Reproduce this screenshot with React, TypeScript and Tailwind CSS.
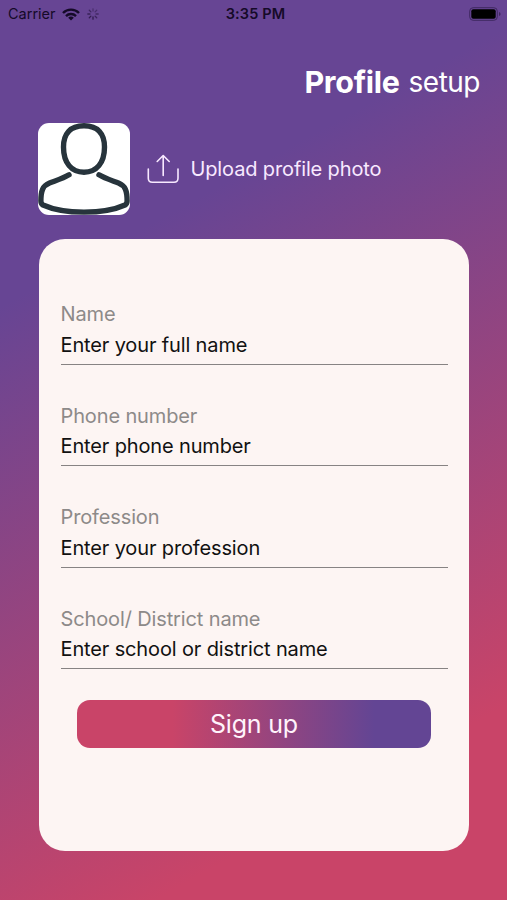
import React from "react";

const fields = [
  { label: "Name", value: "Enter your full name" },
  { label: "Phone number", value: "Enter phone number" },
  { label: "Profession", value: "Enter your profession" },
  { label: "School/ District name", value: "Enter school or district name" },
];

function WifiIcon() {
  return (
    <svg className="ml-[6px] h-[13px] w-[18px]" viewBox="0 0 18 13" fill="none" stroke="#150a28" strokeWidth="2.4">
      <path d="M1 5A11.2 11.2 0 0 1 17 5" />
      <path d="M4 8.1A7 7 0 0 1 14 8.1" />
      <path d="M9 12.6L6.2 9.8A3.9 3.9 0 0 1 11.8 9.8Z" fill="#150a28" stroke="none" />
    </svg>
  );
}

function Spinner() {
  return (
    <svg className="ml-[7px] h-3 w-3" viewBox="0 0 12 12" stroke="#2b1746" strokeWidth="1.3" strokeLinecap="round">
      <path d="M6 .8V3" opacity=".45" />
      <path d="M9.7 2.3L8.1 3.9" opacity=".5" />
      <path d="M11.2 6H9" opacity=".6" />
      <path d="M9.7 9.7L8.1 8.1" opacity=".7" />
      <path d="M6 11.2V9" opacity=".9" />
      <path d="M2.3 9.7L3.9 8.1" opacity=".85" />
      <path d="M.8 6H3" opacity=".75" />
      <path d="M2.3 2.3L3.9 3.9" opacity=".65" />
    </svg>
  );
}

function StatusBar() {
  return (
    <header className="grid h-7 grid-cols-3 items-center pl-2 pr-[6px] text-[#150a28]">
      <div className="flex items-center">
        <span className="text-[14.5px]">Carrier</span>
        <WifiIcon />
        <Spinner />
      </div>
      <span className="pl-[2px] text-center text-[14.5px] font-semibold tracking-[0.15px]">3:35 PM</span>
      <svg className="h-[14px] w-[32px] justify-self-end" viewBox="0 0 32 14" fill="none">
        <rect x=".7" y=".7" width="27.6" height="12.6" rx="3.5" stroke="#3f2860" strokeWidth="1" />
        <rect x="2.3" y="2.3" width="24.4" height="9.4" rx="2" fill="#000" />
        <path d="M30 5V9Q31.6 8.4 31.6 7T30 5Z" fill="#3f2860" />
      </svg>
    </header>
  );
}

function Avatar() {
  return (
    <div className="h-[92px] w-[92px] overflow-hidden rounded-[11px] bg-white">
      <svg className="h-full w-full" viewBox="0 0 92 92" fill="none" stroke="#27343c" strokeWidth="5.4" strokeLinecap="round">
        <path d="M46 2.8C60 2.8 66.5 11 66.5 24C66.5 40 58.500 49.200 46 49.200S25.500 40 25.500 24C25.500 11 32 2.800 46 2.800Z" />
        <path d="M31 51.800C25 55.500 18 57.500 11.500 60C4.500 62.800 2.900 68 2.900 78C2.900 80.500 3.500 81.200 5 82C16 87 31 89.100 46 89.100S76 87 87 82C88.500 81.200 89.100 80.500 89.100 78C89.100 68 87.500 62.800 80.500 60C74 57.500 67 55.500 61 51.800" />
      </svg>
    </div>
  );
}

export default function App() {
  return (
    <main className="flex h-[900px] w-[507px] flex-col overflow-hidden bg-[linear-gradient(151deg,#674594_26%,#c94468_83.5%)] font-['Inter','Liberation_Sans',sans-serif]">
      <StatusBar />
      <h1 className="mt-[33px] flex h-[42px] items-center justify-end gap-[9px] pr-[27px] text-[30.5px] leading-none text-white">
        <span className="font-bold tracking-[-0.3px]">Profile</span>
        <span className="text-[28px] tracking-[-0.5px]">setup</span>
      </h1>
      <section className="mt-5 flex h-[92px] items-center pl-[37.5px] text-[#f8e9ff]">
        <Avatar />
        <svg className="ml-[17px] h-[30px] w-[33px]" viewBox="0 0 33 30" fill="none" stroke="currentColor" strokeWidth="1.6" strokeLinecap="round" strokeLinejoin="round">
          <path d="M1.3 15V24.2Q1.3 28.2 5.3 28.2H27Q31 28.2 31 24.2V15" />
          <path d="M16.2 21.5V1.5M10.2 7.5L16.2 1.5L22.2 7.5" />
        </svg>
        <span className="ml-[11px] whitespace-nowrap text-[20px] leading-6 tracking-[-0.13px]">Upload profile photo</span>
      </section>
      <form className="ml-[39px] mt-6 flex h-[612px] w-[430px] flex-col rounded-[26px] bg-[#fdf5f3] px-[21.5px] pt-[60.4px]">
        {fields.map((field) => (
          <div key={field.label} className="mb-[36px] h-[65.4px] shrink-0 border-b border-[#878383]">
            <p className="h-[30.5px] whitespace-nowrap text-[20px] leading-[30px] tracking-[-0.13px] text-[#8d8a89]">{field.label}</p>
            <p className="whitespace-nowrap text-[20px] leading-[30px] tracking-[-0.14px] text-[#111]">{field.value}</p>
          </div>
        ))}
        <button type="button" className="-mt-[5.4px] h-[48.5px] w-[354px] shrink-0 self-center rounded-[13px] bg-[linear-gradient(90deg,#c94468_27%,#634594_84%)] pt-[2px] text-[25px] leading-none tracking-[-0.2px] text-[#fff3fb]">
          Sign up
        </button>
      </form>
    </main>
  );
}
